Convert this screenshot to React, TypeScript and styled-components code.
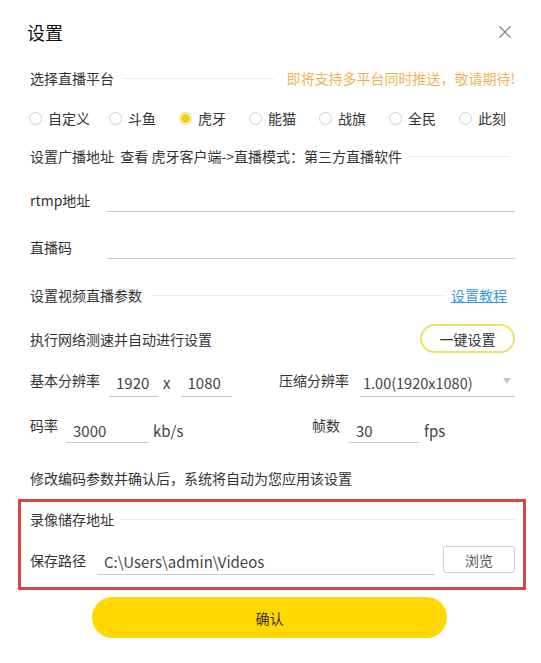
import React from 'react';
import styled, { createGlobalStyle } from 'styled-components';

const GlobalStyle = createGlobalStyle`
  html, body { margin: 0; padding: 0; background: #fff; }
  body {
    font-family: "Noto Sans CJK SC", "Noto Sans", sans-serif;
    color: #333;
    font-size: 14px;
  }
  * { box-sizing: border-box; }
`;

const Dialog = styled.div`
  width: 541px;
  height: 663px;
  padding: 0 26px 0 30px;
  display: flex;
  flex-direction: column;
  background: #fff;
`;

const Header = styled.div`
  height: 64px;
  display: flex;
  align-items: center;
  justify-content: space-between;
`;

const Title = styled.h1`
  margin: 0 0 0 -3px;
  font-size: 18px;
  font-weight: 400;
  line-height: 24px;
  color: #111;
`;

const CloseButton = styled.button`
  width: 14px;
  height: 14px;
  margin-right: 3px;
  padding: 0;
  border: none;
  background: transparent;
  display: flex;
  align-items: center;
  justify-content: center;
  cursor: pointer;
`;

const Row = styled.div<{ $h: number; $mt?: number; $align?: string }>`
  display: flex;
  height: ${(p) => p.$h}px;
  margin-top: ${(p) => p.$mt ?? 0}px;
  align-items: ${(p) => p.$align ?? 'center'};
  flex-shrink: 0;
`;

const Text = styled.span<{ $color?: string }>`
  font-size: 14px;
  line-height: 20px;
  color: ${(p) => p.$color ?? '#333'};
  white-space: pre;
`;

const Divider = styled.div<{ $ml: number; $mr: number }>`
  flex: 1;
  height: 1px;
  background: #ececec;
  margin: 0 ${(p) => p.$mr}px 0 ${(p) => p.$ml}px;
`;

const Link = styled.a`
  font-size: 14px;
  line-height: 20px;
  color: #3d9ad6;
  text-decoration: underline;
  margin-right: 8px;
  cursor: pointer;
`;

const RadioGroup = styled.div`
  display: flex;
  margin-left: -1px;
`;

const RadioItem = styled.label<{ $w: number }>`
  width: ${(p) => p.$w}px;
  display: flex;
  align-items: center;
  gap: 6px;
  font-size: 14px;
  line-height: 20px;
  color: #333;
  cursor: pointer;
`;

const RadioCircle = styled.span<{ $checked?: boolean }>`
  width: 13px;
  height: 13px;
  border-radius: 50%;
  border: 1px solid ${(p) => (p.$checked ? '#e6e0b0' : '#cfcfcf')};
  background: ${(p) => (p.$checked ? '#f7d000' : '#fff')};
  box-shadow: ${(p) => (p.$checked ? 'inset 0 0 0 1px #fff' : 'none')};
  flex-shrink: 0;
`;

const FieldLabel = styled.span<{ $w?: number; $mb?: number }>`
  width: ${(p) => (p.$w ? `${p.$w}px` : 'auto')};
  flex-shrink: 0;
  font-size: 14px;
  line-height: 20px;
  color: #333;
  margin-bottom: ${(p) => p.$mb ?? 0}px;
  white-space: nowrap;
`;

const Field = styled.div<{ $w?: number; $ml?: number; $pb?: number; $pl?: number; $fs?: number }>`
  position: relative;
  width: ${(p) => (p.$w ? `${p.$w}px` : 'auto')};
  flex: ${(p) => (p.$w ? '0 0 auto' : '1')};
  margin-left: ${(p) => p.$ml ?? 0}px;
  height: ${(p) => 23 + (p.$pb ?? 0)}px;
  padding: 0 0 ${(p) => p.$pb ?? 0}px ${(p) => p.$pl ?? 7}px;
  border-bottom: 1px solid #cacaca;
  font-size: ${(p) => p.$fs ?? 14}px;
  line-height: 22px;
  color: #444;
  white-space: nowrap;
`;

const Unit = styled.span<{ $ml: number; $mb?: number }>`
  margin-left: ${(p) => p.$ml}px;
  margin-bottom: ${(p) => p.$mb ?? 1}px;
  font-size: 15px;
  line-height: 22px;
  color: #444;
`;

const Group = styled.div<{ $w?: number }>`
  display: flex;
  align-items: flex-end;
  height: 100%;
  width: ${(p) => (p.$w ? `${p.$w}px` : 'auto')};
  flex: ${(p) => (p.$w ? '0 0 auto' : '1')};
`;

const Caret = styled.span`
  position: absolute;
  right: 4px;
  top: 6px;
  width: 0;
  height: 0;
  border-left: 4px solid transparent;
  border-right: 4px solid transparent;
  border-top: 6px solid #c4c4c4;
`;

const PillButton = styled.button`
  width: 95px;
  height: 29px;
  border: 2px solid #efe26a;
  border-radius: 15px;
  background: #fff;
  font-family: inherit;
  font-size: 14px;
  color: #333;
  padding: 0;
  cursor: pointer;
`;

const HighlightBox = styled.div`
  margin: 9px -11px 0 -12px;
  border: 3px solid #d34845;
  padding: 3px 8px 12px 9px;
  display: flex;
  flex-direction: column;
  flex-shrink: 0;
`;

const BrowseButton = styled.button`
  align-self: flex-start;
  margin-left: 8px;
  width: 72px;
  height: 27px;
  border: 1px solid #cccccc;
  border-radius: 3px;
  background: #fff;
  font-family: inherit;
  font-size: 14px;
  color: #555;
  padding: 0;
  cursor: pointer;
`;

const ConfirmButton = styled.button`
  margin: 7px 0 0 62px;
  width: 355px;
  height: 41px;
  border: none;
  border-radius: 21px;
  background: #ffd800;
  font-family: inherit;
  font-size: 14px;
  color: #333;
  cursor: pointer;
  flex-shrink: 0;
`;

const platforms = ['自定义', '斗鱼', '虎牙', '能猫', '战旗', '全民', '此刻'];

export default function App() {
  return (
    <>
      <GlobalStyle />
      <Dialog>
        <Header>
          <Title>设置</Title>
          <CloseButton aria-label="关闭">
            <svg width="12" height="12" viewBox="0 0 12 12">
              <path d="M0.5 0.5 L11.5 11.5 M11.5 0.5 L0.5 11.5" stroke="#777" strokeWidth="1.1" fill="none" />
            </svg>
          </CloseButton>
        </Header>

        <Row $h={28}>
          <Text>选择直播平台</Text>
          <Divider $ml={8} $mr={12} />
          <Text $color="#f2b25a">即将支持多平台同时推送，敬请期待!</Text>
        </Row>

        <Row $h={28} $mt={12}>
          <RadioGroup>
            {platforms.map((p, i) => (
              <RadioItem key={p} $w={i === 0 ? 80 : 70}>
                <RadioCircle $checked={p === '虎牙'} />
                {p}
              </RadioItem>
            ))}
          </RadioGroup>
        </Row>

        <Row $h={24} $mt={12}>
          <Text>{'设置广播地址  查看 虎牙客户端->直播模式：第三方直播软件'}</Text>
          <Divider $ml={6} $mr={5} />
        </Row>

        <Row $h={30} $mt={14} $align="flex-end">
          <FieldLabel $w={77} $mb={2}>rtmp地址</FieldLabel>
          <Field />
        </Row>

        <Row $h={30} $mt={17} $align="flex-end">
          <FieldLabel $w={77} $mb={2}>直播码</FieldLabel>
          <Field />
        </Row>

        <Row $h={28} $mt={22}>
          <Text>设置视频直播参数</Text>
          <Divider $ml={10} $mr={5} />
          <Link>设置教程</Link>
        </Row>

        <Row $h={29} $mt={15}>
          <Text>执行网络测速并自动进行设置</Text>
          <Divider $ml={0} $mr={0} style={{ background: 'transparent' }} />
          <PillButton>一键设置</PillButton>
        </Row>

        <Row $h={30} $mt={14} $align="flex-end">
          <Group $w={249}>
            <FieldLabel $w={70} $mb={7}>基本分辨率</FieldLabel>
            <Field $w={49} $ml={9} $pb={2} $fs={15}>1920</Field>
            <Unit $ml={5} $mb={3}>x</Unit>
            <Field $w={51} $ml={11} $pb={2} $pl={6} $fs={15}>1080</Field>
          </Group>
          <Group>
            <FieldLabel $w={70} $mb={7}>压缩分辨率</FieldLabel>
            <Field $ml={11} $pb={2} $pl={3} $fs={14.5}>
              1.00(1920x1080)
              <Caret />
            </Field>
          </Group>
        </Row>

        <Row $h={32} $mt={14} $align="flex-end">
          <Group $w={282}>
            <FieldLabel $w={28} $mb={8}>码率</FieldLabel>
            <Field $w={83} $ml={8} $fs={15}>3000</Field>
            <Unit $ml={4}>kb/s</Unit>
          </Group>
          <Group>
            <FieldLabel $w={28} $mb={8}>帧数</FieldLabel>
            <Field $w={71} $ml={9} $fs={15}>30</Field>
            <Unit $ml={4}>fps</Unit>
          </Group>
        </Row>

        <Row $h={24} $mt={23}>
          <Text>修改编码参数并确认后，系统将自动为您应用该设置</Text>
        </Row>

        <HighlightBox>
          <Row $h={28}>
            <Text>录像储存地址</Text>
            <Divider $ml={6} $mr={0} />
          </Row>
          <Row $h={29} $mt={13} $align="flex-end">
            <FieldLabel $w={56} $mb={5}>保存路径</FieldLabel>
            <Field $ml={11} $pb={1} $fs={15}>C:\Users\admin\Videos</Field>
            <BrowseButton>浏览</BrowseButton>
          </Row>
        </HighlightBox>

        <ConfirmButton>确认</ConfirmButton>
      </Dialog>
    </>
  );
}
